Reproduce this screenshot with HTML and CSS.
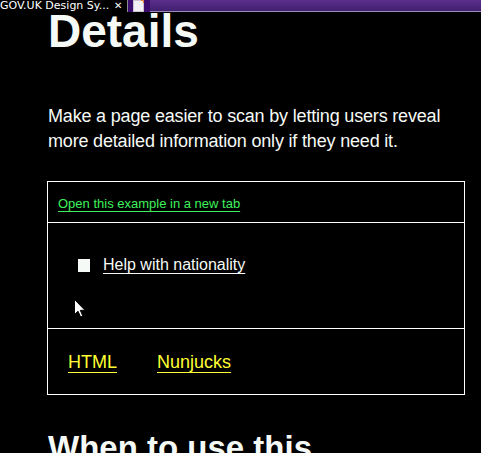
FILE: index.html
```html
<!DOCTYPE html>
<html lang="en">
<head>
<meta charset="utf-8">
<title>Details – GOV.UK Design System</title>
<link rel="stylesheet" href="styles.css">
</head>
<body>
<div class="tabbar">
  <div class="tab"><span class="tab-title">GOV.UK Design Sy...</span><span class="tab-close">✕</span></div>
  <div class="newtab">
    <svg width="11" height="12" viewBox="0 0 11 12"><rect x="0.5" y="0.5" width="10" height="11" fill="#f2f0f4" stroke="#c9c3d1"/><path d="M8 0.5h2.5V3" fill="none" stroke="#e07a30" stroke-width="1"/></svg>
  </div>
  <div class="tabfill"></div>
</div>
<main class="main">
  <h1 class="title">Details</h1>
  <p class="lead">Make a page easier to scan by letting users reveal more detailed information only if they need it.</p>
  <div class="example">
    <div class="example-head"><a class="link-green" href="#">Open this example in a new tab</a></div>
    <div class="example-body">
      <div class="summary"><span class="marker"></span><span class="summary-text">Help with nationality</span></div>
      <svg class="cursor" width="12" height="19" viewBox="0 0 12 19"><path d="M0.5 0.5 L0.5 15.5 L4 12.2 L6.6 18 L8.8 17 L6.3 11.3 L11 11.3 Z" fill="#fff" stroke="#000" stroke-width="1"/></svg>
    </div>
    <div class="example-tabs"><a class="link-yellow" href="#">HTML</a><a class="link-yellow" href="#">Nunjucks</a></div>
  </div>
  <h2 class="subtitle">When to use this</h2>
</main>
</body>
</html>
```
FILE: styles.css
```css
html, body {
  margin: 0;
  padding: 0;
  background: #000;
  height: 100%;
  overflow: hidden;
}
body {
  font-family: "Liberation Sans", Arial, sans-serif;
  color: #f6faf6;
}
.tabbar {
  display: flex;
  height: 12px;
  position: relative;
  z-index: 2;
  overflow: hidden;
}
.tab {
  width: 127px;
  background: #000;
  border-right: 1px solid #8a8a8a;
  display: flex;
  align-items: flex-start;
  color: #fff;
  font-family: "DejaVu Sans", sans-serif;
  font-size: 11px;
  line-height: 12px;
}
.tab-title {
  flex: 1;
  white-space: nowrap;
  overflow: hidden;
}
.tab-close {
  width: 13px;
  font-size: 10px;
  line-height: 12px;
}
.newtab {
  width: 22px;
  background: #3b0d6e;
  display: flex;
  align-items: flex-start;
  padding-left: 5px;
  box-sizing: border-box;
}
.tabfill {
  flex: 1;
  background: linear-gradient(#5b2f8d, #41206f);
  border-bottom: 1px solid #9a86b8;
}
.main {
  padding-left: 48px;
  width: 417px;
}
.title {
  margin: 0;
  font-size: 46px;
  line-height: 38px;
  font-weight: bold;
}
.lead {
  margin: 54px 0 0;
  font-size: 18px;
  line-height: 25px;
  letter-spacing: -0.18px;
}
.example {
  margin: 27px 0 0 -1px;
  border: 1px solid #fff;
  width: 416px;
}
.example-head {
  height: 41px;
  border-bottom: 1px solid #fff;
  padding-left: 10px;
  display: flex;
  align-items: center;
  padding-top: 2px;
  box-sizing: border-box;
}
.link-green {
  color: #3ff05a;
  font-size: 13px;
  text-decoration: underline;
  text-underline-offset: 3px;
}
.example-body {
  height: 106px;
  border-bottom: 1px solid #fff;
  position: relative;
  padding: 32px 0 0 30px;
  box-sizing: border-box;
}
.summary {
  display: flex;
  align-items: center;
  gap: 13px;
}
.marker {
  width: 12px;
  height: 13px;
  background: #f6faf6;
}
.summary-text {
  font-size: 16px;
  line-height: 20px;
  text-decoration: underline;
  text-underline-offset: 3px;
}
.cursor {
  position: absolute;
  left: 26px;
  top: 76px;
}
.example-tabs {
  height: 65px;
  display: flex;
  align-items: center;
  gap: 40px;
  padding: 2px 0 0 20px;
  box-sizing: border-box;
}
.link-yellow {
  color: #ffff33;
  font-size: 18px;
  text-decoration: underline;
  text-underline-offset: 4px;
}
.subtitle {
  margin: 33px 0 0;
  font-size: 33px;
  line-height: 40px;
  font-weight: bold;
}
```
